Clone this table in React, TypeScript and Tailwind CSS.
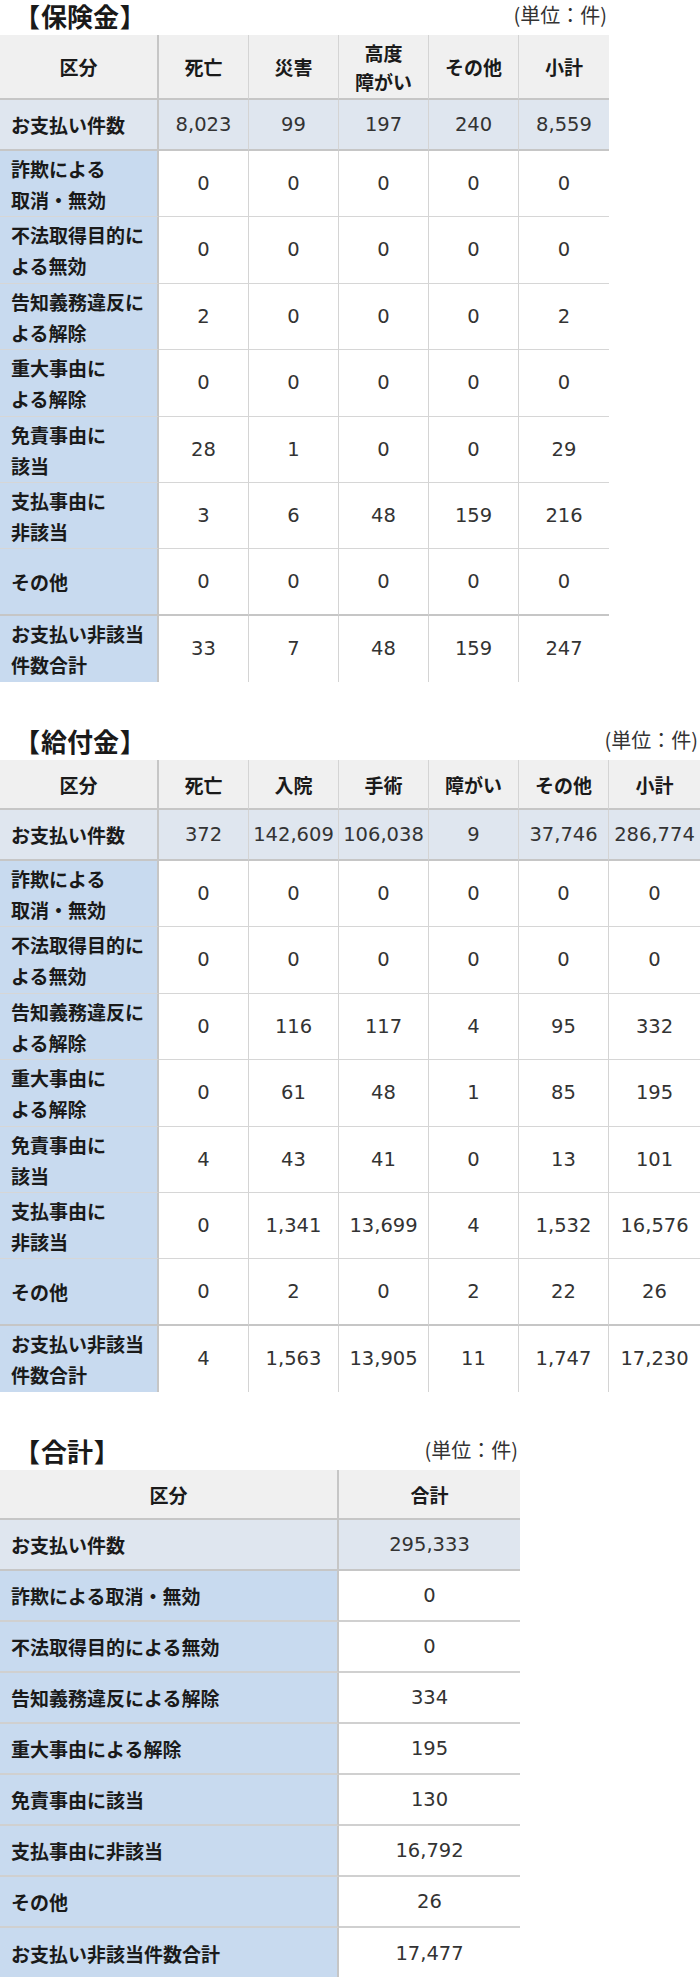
import React from "react";

type Row = { label: React.ReactNode; values: string[]; h: string };

const JP = "[font-family:'Noto_Sans_CJK_JP','Noto_Sans',sans-serif]";
const NUM = "[font-family:'DejaVu_Sans','Noto_Sans_CJK_JP',sans-serif]";

function Section({
  title,
  widthClass,
  colClasses,
  headers,
  headerH,
  rows,
  totalLine,
  rowLine,
  firstValues,
}: {
  title: string;
  widthClass: string;
  colClasses: string[];
  headers: React.ReactNode[];
  headerH: string;
  rows: Row[];
  totalLine: boolean;
  rowLine: string;
  firstValues: string[];
}) {
  const last = colClasses.length - 1;
  const vline = (i: number) => (i === 0 ? "border-r-2 border-r-[#c6c6c6]" : i === last ? "" : "border-r border-r-[#d4d4d4]");
  return (
    <section className={widthClass}>
      <div className="flex h-[35px] items-start justify-between pt-[1px]">
        <div className={`pl-[14px] text-[26px] font-bold leading-[30px] text-[#1a1a1a] [word-spacing:-5px] ${JP}`}>{title}</div>
        <div className={`pr-[2px] text-[20px] leading-[28px] text-[#333] ${JP}`}>(単位：件)</div>
      </div>
      <table className={`table-fixed border-separate border-spacing-0 ${widthClass}`}>
        <thead>
          <tr>
            {headers.map((h, i) => (
              <th
                key={i}
                className={`${colClasses[i]} ${headerH} ${vline(i)} border-b-2 border-b-[#c6c6c6] bg-[#f0f0f0] p-0 text-center align-middle text-[19px] font-bold leading-[29px] text-[#1a1a1a] ${JP}`}
              >
                {h}
              </th>
            ))}
          </tr>
        </thead>
        <tbody>
          <tr>
            <td
              className={`h-[51px] ${vline(0)} border-b-2 border-b-[#c6c6c6] bg-[#dfe6ef] p-0 pl-[11px] align-middle text-[19px] font-bold leading-[30px] text-[#1a1a1a] ${JP}`}
            >
              お支払い件数
            </td>
            {firstValues.map((v, i) => (
              <td
                key={i}
                className={`h-[51px] ${vline(i + 1)} border-b-2 border-b-[#c6c6c6] bg-[#dfe6ef] p-0 text-center align-middle text-[19.5px] leading-[30px] text-[#333] ${NUM}`}
              >
                {v}
              </td>
            ))}
          </tr>
          {rows.map((r, ri) => {
            const isLast = ri === rows.length - 1;
            const beforeThick = totalLine && ri === rows.length - 2;
            const bottom = isLast ? "" : beforeThick ? "border-b-2 border-b-[#c6c6c6]" : rowLine;
            return (
              <tr key={ri}>
                <td
                  className={`${r.h} ${bottom} ${vline(0)} bg-[#c8daef] p-0 pl-[11px] align-middle text-[19px] font-bold leading-[31px] text-[#1a1a1a] ${JP}`}
                >
                  {r.label}
                </td>
                {r.values.map((v, i) => (
                  <td
                    key={i}
                    className={`${r.h} ${bottom} ${vline(i + 1)} bg-white p-0 text-center align-middle text-[19.5px] leading-[30px] text-[#333] ${NUM}`}
                  >
                    {v}
                  </td>
                ))}
              </tr>
            );
          })}
        </tbody>
      </table>
    </section>
  );
}

const two = (a: string, b: string) => (
  <>
    {a}
    <br />
    {b}
  </>
);

const H8 = ["h-[66px]", "h-[67px]", "h-[66px]", "h-[67px]", "h-[66px]", "h-[66px]", "h-[67px]", "h-[66px]"];

const labels8 = [
  two("詐欺による", "取消・無効"),
  two("不法取得目的に", "よる無効"),
  two("告知義務違反に", "よる解除"),
  two("重大事由に", "よる解除"),
  two("免責事由に", "該当"),
  two("支払事由に", "非該当"),
  "その他",
  two("お支払い非該当", "件数合計"),
];

const t1Vals = [
  ["0", "0", "0", "0", "0"],
  ["0", "0", "0", "0", "0"],
  ["2", "0", "0", "0", "2"],
  ["0", "0", "0", "0", "0"],
  ["28", "1", "0", "0", "29"],
  ["3", "6", "48", "159", "216"],
  ["0", "0", "0", "0", "0"],
  ["33", "7", "48", "159", "247"],
];

const t2Vals = [
  ["0", "0", "0", "0", "0", "0"],
  ["0", "0", "0", "0", "0", "0"],
  ["0", "116", "117", "4", "95", "332"],
  ["0", "61", "48", "1", "85", "195"],
  ["4", "43", "41", "0", "13", "101"],
  ["0", "1,341", "13,699", "4", "1,532", "16,576"],
  ["0", "2", "0", "2", "22", "26"],
  ["4", "1,563", "13,905", "11", "1,747", "17,230"],
];

const t3: [string, string][] = [
  ["詐欺による取消・無効", "0"],
  ["不法取得目的による無効", "0"],
  ["告知義務違反による解除", "334"],
  ["重大事由による解除", "195"],
  ["免責事由に該当", "130"],
  ["支払事由に非該当", "16,792"],
  ["その他", "26"],
  ["お支払い非該当件数合計", "17,477"],
];

export default function App() {
  const t1Rows: Row[] = labels8.map((l, i) => ({ label: l, values: t1Vals[i], h: H8[i] }));
  const t2Rows: Row[] = labels8.map((l, i) => ({ label: l, values: t2Vals[i], h: H8[i] }));
  const t3Rows: Row[] = t3.map(([l, v]) => ({ label: l, values: [v], h: "h-[51px]" }));

  return (
    <div className="flex w-[700px] flex-col gap-[43px] bg-white">
      <Section
        title="【 保険金 】"
        widthClass="w-[609px]"
        colClasses={["w-[159px]", "w-[90px]", "w-[90px]", "w-[90px]", "w-[90px]", "w-[90px]"]}
        headers={["区分", "死亡", "災害", two("高度", "障がい"), "その他", "小計"]}
        headerH="h-[65px]"
        firstValues={["8,023", "99", "197", "240", "8,559"]}
        rows={t1Rows}
        totalLine
        rowLine="border-b border-b-[#d6d6d6]"
      />
      <Section
        title="【 給付金 】"
        widthClass="w-[700px]"
        colClasses={["w-[159px]", "w-[90px]", "w-[90px]", "w-[90px]", "w-[90px]", "w-[90px]", "w-[91px]"]}
        headers={["区分", "死亡", "入院", "手術", "障がい", "その他", "小計"]}
        headerH="h-[50px]"
        firstValues={["372", "142,609", "106,038", "9", "37,746", "286,774"]}
        rows={t2Rows}
        totalLine
        rowLine="border-b border-b-[#d6d6d6]"
      />
      <Section
        title="【 合計 】"
        widthClass="w-[520px]"
        colClasses={["w-[339px]", "w-[181px]"]}
        headers={["区分", "合計"]}
        headerH="h-[50px]"
        firstValues={["295,333"]}
        rows={t3Rows}
        totalLine={false}
        rowLine="border-b-2 border-b-[#d0d0d0]"
      />
    </div>
  );
}
